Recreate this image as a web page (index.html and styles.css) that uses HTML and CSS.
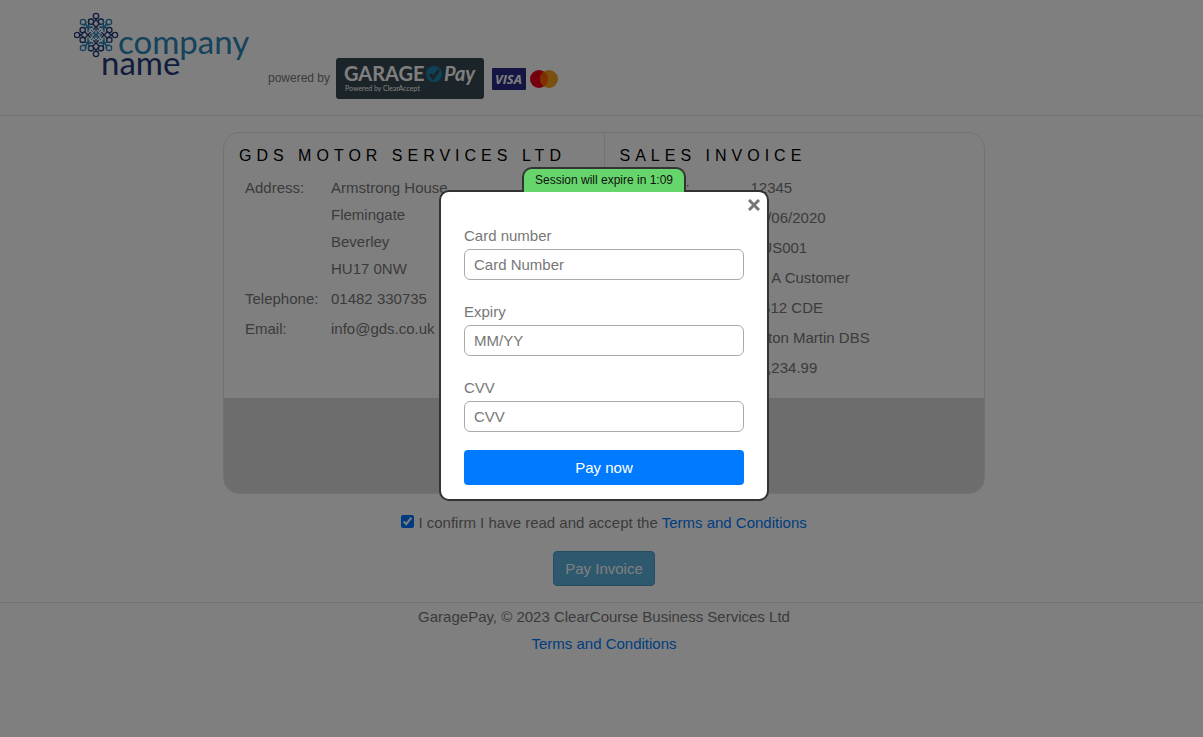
FILE: index.html
```html
<!DOCTYPE html>
<html lang="en">
    <head>
        <meta charset="utf-8">
        <meta name="viewport" content="width=device-width, initial-scale=1">
        <title>GaragePay</title>
        <link rel="stylesheet" href="styles.css">
    </head>
    <body>
        <header class="site_header">
            <svg class="company_logo" width="178" height="70" viewBox="0 0 178 70" role="img" aria-label="company name">
                <defs>
                    <g id="knot_arm" fill="none" stroke-width="4">
                        <g stroke="#2a85b8">
                            <circle cx="-39" cy="-39" r="8"/>
                            <path d="M-40 -31Q-26 -31 -24 -24V-8M-31 -40Q-31 -26 -24 -24H-8M-22 -46V-14M-46 -22H-14"/>
                            <path d="M0 0Q-9 -9 0 -18Q9 -9 0 0M-3 -3L-15 -15" stroke-width="3"/>
                        </g>
                        <g stroke="#233a78">
                            <circle cx="0" cy="-57" r="8"/>
                            <circle cx="-15" cy="-40" r="8"/>
                            <circle cx="15" cy="-40" r="8"/>
                            <path d="M-4 -50L10 -34M4 -50L-10 -34M-10 -34L8 -16M10 -34L-8 -16"/>
                        </g>
                    </g>
                </defs>
                <g transform="translate(22 23) scale(.333)">
                    <use href="#knot_arm"/>
                    <use href="#knot_arm" transform="rotate(90)"/>
                    <use href="#knot_arm" transform="rotate(180)"/>
                    <use href="#knot_arm" transform="rotate(270)"/>
                </g>
                <text class="logo_company" x="44" y="42">company</text>
                <text class="logo_name" x="27" y="63">name</text>
            </svg>
            <div class="powered">
                <span>powered by</span>
                <svg class="garagepay" width="148" height="41" viewBox="0 0 148 41" role="img" aria-label="GaragePay, powered by ClearAccept">
                    <rect width="148" height="41" rx="3" fill="#374850"/>
                    <text class="gp_garage" x="8" y="23">GARAGE</text>
                    <circle cx="98" cy="16" r="8" fill="#1c84b0"/>
                    <path d="M94 16l3 4 6-8" fill="none" stroke="#374850" stroke-width="3"/>
                    <text class="gp_pay" x="108" y="23">Pay</text>
                    <text class="gp_small" x="9" y="33">Powered by ClearAccept</text>
                </svg>
                <svg class="cards" width="66" height="22" viewBox="0 0 66 22" role="img" aria-label="Visa, Mastercard">
                    <rect width="34" height="22" rx="1" fill="#2a2a86"/>
                    <text class="visa" x="3" y="16">VISA</text>
                    <circle cx="47" cy="11" r="9" fill="#eb001b"/>
                    <circle cx="57" cy="11" r="9" fill="#f79e1b"/>
                    <path d="M52 3.500a9 9 0 0 1 0 15a9 9 0 0 1 0-15" fill="#ff5f00"/>
                </svg>
            </div>
        </header>

        <main>
            <div class="invoice">
                <div class="invoice_columns">
                    <section class="invoice_column">
                        <h1>GDS MOTOR SERVICES LTD</h1>
                        <table class="supplier">
                            <tr><th>Address:</th><td>Armstrong House<br>Flemingate<br>Beverley<br>HU17 0NW</td></tr>
                            <tr><th>Telephone:</th><td>01482 330735</td></tr>
                            <tr><th>Email:</th><td>info@gds.co.uk</td></tr>
                        </table>
                    </section>
                    <section class="invoice_column">
                        <h1>SALES INVOICE</h1>
                        <table class="details">
                            <tr><th>Invoice #:</th><td>12345</td></tr>
                            <tr><th>Date:</th><td>01/06/2020</td></tr>
                            <tr><th>Account:</th><td>CUS001</td></tr>
                            <tr><th>Name:</th><td>Mr A Customer</td></tr>
                            <tr><th>Reg:</th><td>AB12 CDE</td></tr>
                            <tr><th>Vehicle:</th><td>Aston Martin DBS</td></tr>
                            <tr><th>Amount:</th><td>£1,234.99</td></tr>
                        </table>
                    </section>
                </div>
                <div class="invoice_foot"></div>
            </div>
            <p class="confirm">
                <input type="checkbox" id="accept" checked>
                <label for="accept">I confirm I have read and accept the</label>
                <a href="#terms">Terms and Conditions</a>
            </p>
            <button type="button" class="pay_invoice">Pay Invoice</button>
        </main>

        <footer class="site_footer">
            <div>GaragePay, © 2023 ClearCourse Business Services Ltd</div>
            <a href="#terms">Terms and Conditions</a>
        </footer>

        <div class="overlay">
            <div class="session">Session will expire in 1:09</div>
            <form class="card_form" role="dialog" aria-label="Card payment">
                <button type="button" class="close" aria-label="Close">
                    <svg width="12" height="12" viewBox="0 0 12 12"><path d="M1 1l10 10M11 1L1 11" stroke="#777" stroke-width="3"/></svg>
                </button>
                <label for="card_number">Card number</label>
                <input type="text" id="card_number" placeholder="Card Number">
                <label for="expiry">Expiry</label>
                <input type="text" id="expiry" placeholder="MM/YY">
                <label for="cvv">CVV</label>
                <input type="text" id="cvv" placeholder="CVV">
                <button type="submit" class="pay_now">Pay now</button>
            </form>
        </div>
    </body>
</html>
```

FILE: styles.css
```css
* {
    box-sizing: border-box;
}
body {
    margin: 0;
    background: #fff;
    color: #777;
    font-family: "Liberation Sans", Arial, sans-serif;
    font-size: 15px;
    line-height: 27px;
}
a {
    color: #007bff;
    text-decoration: none;
}

/* header */
.site_header {
    display: flex;
    align-items: flex-start;
    gap: 16px;
    height: 116px;
    padding: 12px 74px;
    border-bottom: 1px solid #e5e5e5;
}
.powered {
    display: flex;
    align-items: center;
    margin-top: 46px;
    font-size: 12px;
}
.garagepay {
    margin: 0 8px 0 6px;
}
.logo_company,
.logo_name {
    font-family: Lato, sans-serif;
    font-size: 33px;
    fill: #2a85b8;
}
.logo_name {
    fill: #233a78;
}
.gp_garage,
.gp_pay,
.gp_small {
    font-family: Lato, sans-serif;
    font-size: 20px;
    font-weight: bold;
    fill: #fff;
}
.gp_pay {
    font-style: italic;
}
.gp_small {
    font-size: 7px;
    font-weight: normal;
}
.visa {
    font-family: "Open Sans", sans-serif;
    font-size: 13px;
    font-weight: bold;
    font-style: italic;
    fill: #fff;
}

/* invoice */
main {
    display: flex;
    flex-direction: column;
    align-items: center;
    padding: 16px 0 16px 5px;
}
.invoice {
    width: 100%;
    max-width: 762px;
    border: 1px solid #e5e5e5;
    border-radius: 16px;
    overflow: hidden;
}
.invoice_columns {
    display: flex;
}
.invoice_column {
    flex: 1;
    padding: 9px 15px 14px;
}
.invoice_column + .invoice_column {
    border-left: 1px solid #e5e5e5;
}
h1 {
    margin: 0 0 5px;
    color: #000;
    font-size: 16px;
    font-weight: normal;
    letter-spacing: 5px;
    white-space: nowrap;
}
table {
    margin-left: 6px;
    border-collapse: collapse;
}
th,
td {
    padding: 0 0 3px;
    font-weight: normal;
    text-align: left;
    vertical-align: top;
}
.supplier th {
    width: 86px;
}
.details th {
    width: 125px;
}
.invoice_foot {
    height: 95px;
    background: #dadada;
}
.confirm {
    margin: 15px 0;
}
.confirm input {
    margin: 0;
}
button {
    font-family: inherit;
    font-size: 15px;
    cursor: pointer;
}
.pay_invoice {
    height: 35px;
    padding: 0 11px;
    border: 1px solid #4c9ac4;
    border-radius: 4px;
    background: #5bb0dc;
    color: #fff;
}
.site_footer {
    padding-left: 5px;
    border-top: 1px solid #e5e5e5;
    text-align: center;
}

/* payment dialog */
.overlay {
    position: fixed;
    top: 0;
    right: 0;
    bottom: 0;
    left: 0;
    display: flex;
    flex-direction: column;
    align-items: center;
    padding: 167px 0 0 5px;
    background: rgba(0, 0, 0, .5);
}
.session {
    z-index: 1;
    height: 25px;
    margin-bottom: -2px;
    padding: 0 11px;
    border: 2px solid #333;
    border-bottom: 0;
    border-radius: 10px 10px 0 0;
    background: #66d56b;
    color: #111;
    font-size: 12px;
    line-height: 23px;
}
.card_form {
    position: relative;
    display: flex;
    flex-direction: column;
    width: 330px;
    padding: 30px 23px 14px;
    border: 2px solid #333;
    border-radius: 10px;
    background: #fff;
}
.card_form input {
    height: 31px;
    margin-bottom: 18px;
    padding: 0 9px;
    border: 1px solid #aaa;
    border-radius: 6px;
    color: #777;
    font-family: inherit;
    font-size: 15px;
}
.card_form input::placeholder {
    color: #777;
}
.pay_now {
    height: 35px;
    border: 0;
    border-radius: 4px;
    background: #007bff;
    color: #fff;
}
.close {
    position: absolute;
    top: 6px;
    right: 6px;
    display: flex;
    padding: 1px;
    border: 0;
    background: none;
}
```
